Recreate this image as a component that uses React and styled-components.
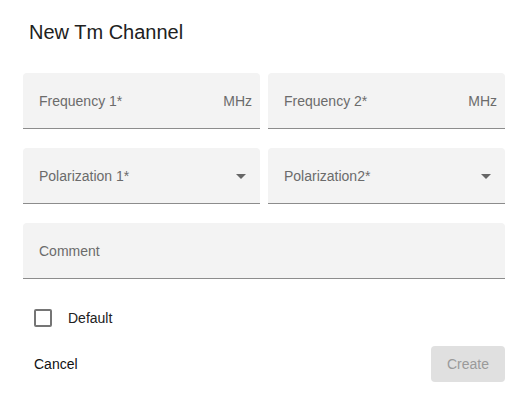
import React from "react";
import styled, { createGlobalStyle } from "styled-components";

const GlobalStyle = createGlobalStyle`
  body {
    margin: 0;
    background: #fff;
    font-family: "Liberation Sans", Arial, sans-serif;
  }
`;

const Dialog = styled.div`
  width: 526px;
  height: 399px;
  box-sizing: border-box;
  padding: 0 21px 0 23px;
  display: flex;
  flex-direction: column;
`;

const Title = styled.h2`
  margin: 0;
  padding: 20px 0 0 6px;
  height: 73px;
  box-sizing: border-box;
  font-size: 20px;
  font-weight: 400;
  color: #212121;
  line-height: 24px;
`;

const Row = styled.div`
  display: flex;
  gap: 8px;
  margin-bottom: 19px;
`;

const Field = styled.div`
  flex: 1;
  height: 56px;
  background: #f3f3f3;
  border-radius: 4px 4px 0 0;
  border-bottom: 1px solid #8c8c8c;
  display: flex;
  align-items: center;
  padding: 1px 8px 0 16px;
  box-sizing: border-box;
  font-size: 14px;
  color: #6b6b6b;
`;

const Label = styled.span`
  flex: 1;
`;

const Adornment = styled.span`
  color: #6b6b6b;
`;

const Arrow = styled.svg`
  width: 24px;
  height: 24px;
  margin-right: -1px;
  fill: #666;
`;

const CheckRow = styled.label`
  display: flex;
  align-items: center;
  gap: 16px;
  margin: 11px 0 0 11px;
  font-size: 14px;
  color: #212121;
`;

const Box = styled.span`
  width: 18px;
  height: 18px;
  box-sizing: border-box;
  border: 2px solid #757575;
  border-radius: 2px;
`;

const Actions = styled.div`
  display: flex;
  justify-content: space-between;
  align-items: center;
  margin-top: 19px;
`;

const TextButton = styled.button`
  border: none;
  background: none;
  font-family: inherit;
  font-size: 14px;
  color: #111;
  padding: 0 0 0 11px;
`;

const FilledButton = styled.button`
  border: none;
  width: 74px;
  height: 36px;
  border-radius: 4px;
  background: #e0e0e0;
  color: #9a9a9a;
  font-family: inherit;
  font-size: 14px;
`;

const DropIcon = () => (
  <Arrow viewBox="0 0 24 24">
    <path d="M7 10l5 5 5-5z" />
  </Arrow>
);

export default function App() {
  return (
    <Dialog>
      <GlobalStyle />
      <Title>New Tm Channel</Title>
      <Row>
        <Field>
          <Label>Frequency 1*</Label>
          <Adornment>MHz</Adornment>
        </Field>
        <Field>
          <Label>Frequency 2*</Label>
          <Adornment>MHz</Adornment>
        </Field>
      </Row>
      <Row>
        <Field>
          <Label>Polarization 1*</Label>
          <DropIcon />
        </Field>
        <Field>
          <Label>Polarization2*</Label>
          <DropIcon />
        </Field>
      </Row>
      <Row>
        <Field>
          <Label>Comment</Label>
        </Field>
      </Row>
      <CheckRow>
        <Box />
        Default
      </CheckRow>
      <Actions>
        <TextButton>Cancel</TextButton>
        <FilledButton>Create</FilledButton>
      </Actions>
    </Dialog>
  );
}
